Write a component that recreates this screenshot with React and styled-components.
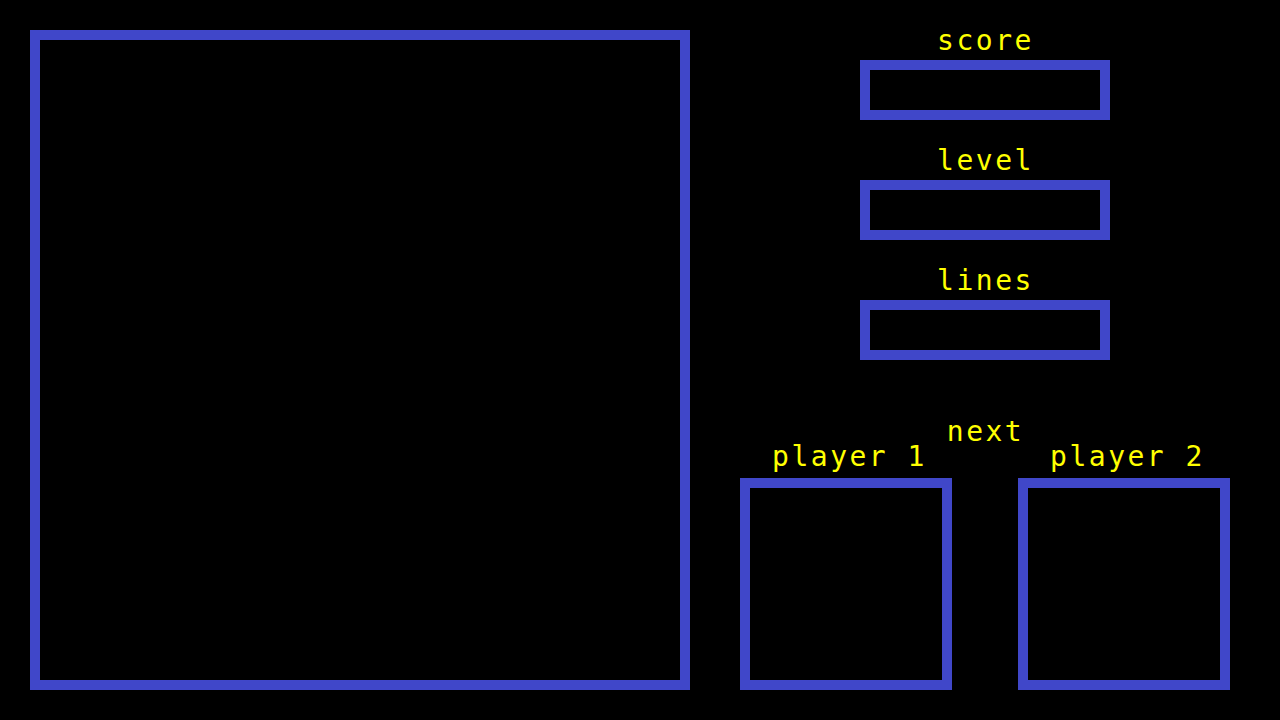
import styled, { createGlobalStyle } from "styled-components";

//--------------------------------------------

const GlobalStyle = createGlobalStyle`
  html, body {
    margin: 0;
    padding: 0;
    background: #000;
  }
`

const stats = ["score", "level", "lines"]
const players = ["player 1", "player 2"]

const App = () => {
  return (
    <>
      <GlobalStyle />
      <StyledScreen>
        <StyledBoard />
        <StyledSide>
          {stats.map((name) => (
            <StyledStat key={name}>
              <StyledLabel>{name}</StyledLabel>
              <StyledStatBox />
            </StyledStat>
          ))}
          <StyledNextLabel>next</StyledNextLabel>
          <StyledPlayers>
            {players.map((name) => (
              <StyledPlayer key={name}>
                <StyledPlayerLabel>{name}</StyledPlayerLabel>
                <StyledPreview />
              </StyledPlayer>
            ))}
          </StyledPlayers>
        </StyledSide>
      </StyledScreen>
    </>
  )
}

export default App;

//----------------------------------------------

const blue = "#4047c9"

const StyledScreen = styled.div`
  display: flex;
  width: 1280px;
  height: 720px;
  box-sizing: border-box;
  padding: 30px;
  background: #000;
  font-family: 'DejaVu Sans Mono', 'Liberation Mono', monospace;
  color: #ffff00;
`

const StyledBoard = styled.div`
  width: 660px;
  height: 660px;
  flex-shrink: 0;
  box-sizing: border-box;
  border: 10px solid ${blue};
`

const StyledSide = styled.div`
  flex: 1;
  display: flex;
  flex-direction: column;
  align-items: center;
  padding-left: 29px;
`

const StyledStat = styled.div`
  display: flex;
  flex-direction: column;
  align-items: center;
  margin-bottom: 30px;
  &:nth-of-type(3) { margin-bottom: 0; }
`

const StyledLabel = styled.div`
  font-size: 28px;
  line-height: 20px;
  letter-spacing: 2.5px;
  margin: 1px 0 9px 2px;
`

const StyledStatBox = styled.div`
  width: 250px;
  height: 60px;
  box-sizing: border-box;
  border: 10px solid ${blue};
`

const StyledNextLabel = styled(StyledLabel)`
  margin: 62px 0 5px 2px;
`

const StyledPlayers = styled.div`
  display: flex;
  gap: 66px;
`

const StyledPlayer = styled.div`
  display: flex;
  flex-direction: column;
  align-items: center;
`

const StyledPlayerLabel = styled(StyledLabel)`
  margin: 0 0 11px 8px;
`

const StyledPreview = styled.div`
  width: 212px;
  height: 212px;
  box-sizing: border-box;
  border: 10px solid ${blue};
`
